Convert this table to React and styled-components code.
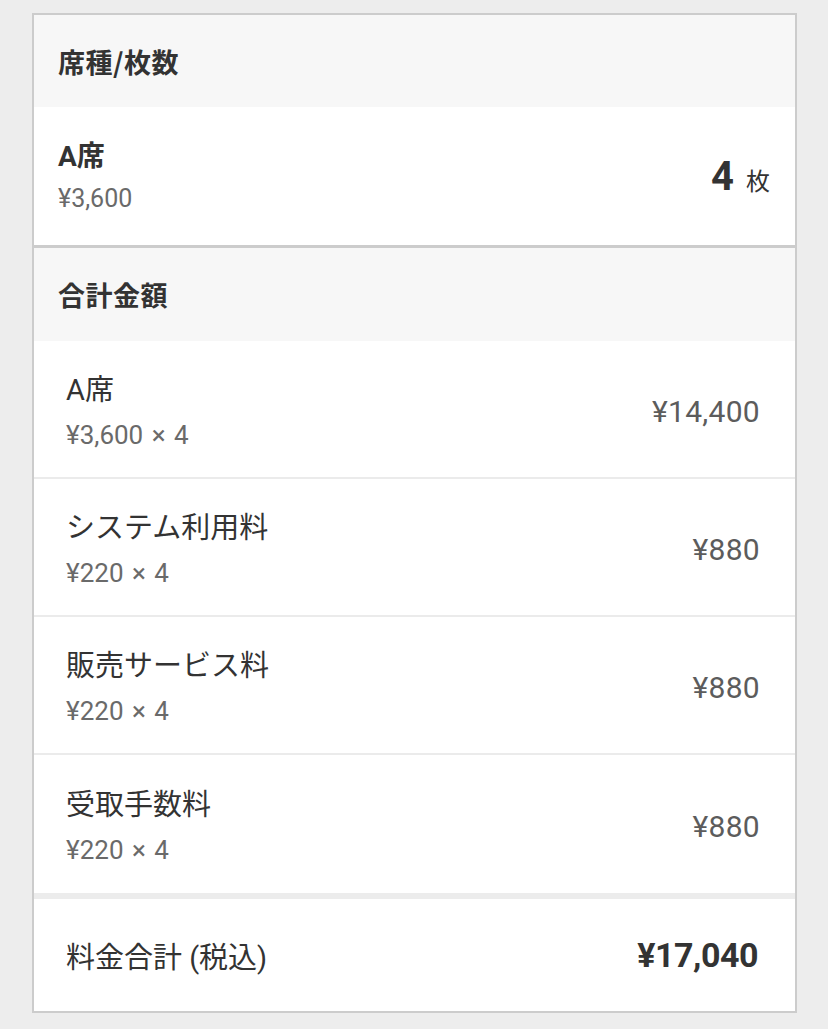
import React from "react";
import styled, { createGlobalStyle } from "styled-components";

const GlobalStyle = createGlobalStyle`
  html, body {
    margin: 0;
    padding: 0;
    background: #ededed;
  }
  body {
    font-family: Roboto, "Noto Sans CJK JP", sans-serif;
    color: #333;
  }
`;

const Page = styled.div`
  padding: 13px 31px 18px 32px;
`;

const Card = styled.div`
  background: #fff;
  border: 2px solid #cccccc;
`;

const Section = styled.section`
  border-top: ${(p) => (p.$divided ? "3px solid #cccccc" : "none")};
`;

const SectionHeader = styled.h2`
  margin: 0;
  height: ${(p) => p.$h || 92}px;
  display: flex;
  align-items: center;
  padding: 0 24px;
  background: #f7f7f7;
  font-family: "Noto Sans CJK JP", sans-serif;
  font-size: 27px;
  font-weight: 700;
  color: #333;
  letter-spacing: 0.5px;
`;

const Row = styled.div`
  display: flex;
  align-items: center;
  justify-content: space-between;
  box-sizing: border-box;
  height: ${(p) => p.$h}px;
  padding: ${(p) => p.$pad};
  border-bottom: ${(p) => (p.$sep ? "2px solid #ebebeb" : "none")};
`;

const Labels = styled.div`
  display: flex;
  flex-direction: column;
  gap: ${(p) => p.$gap || 8}px;
`;

const Title = styled.div`
  font-family: Roboto, "Noto Sans CJK JP", sans-serif;
  font-size: ${(p) => p.$size}px;
  line-height: ${(p) => p.$size + 10}px;
  font-weight: ${(p) => (p.$bold ? 700 : 400)};
  color: #333;
`;

const Sub = styled.div`
  font-family: Roboto, "Noto Sans CJK JP", sans-serif;
  font-size: ${(p) => p.$size}px;
  line-height: ${(p) => p.$size + 8}px;
  color: #6a6a6a;
  word-spacing: 2px;
`;

const Count = styled.div`
  display: flex;
  align-items: baseline;
  gap: 12px;
  color: #333;
`;

const CountNum = styled.span`
  font-family: Roboto, sans-serif;
  font-size: 40px;
  font-weight: 700;
`;

const CountUnit = styled.span`
  font-family: "Noto Sans CJK JP", sans-serif;
  font-size: 24px;
`;

const Amount = styled.div`
  font-family: Roboto, "Noto Sans CJK JP", sans-serif;
  font-size: ${(p) => (p.$total ? 34 : 30)}px;
  font-weight: ${(p) => (p.$total ? 700 : 400)};
  color: ${(p) => (p.$total ? "#333" : "#5c5c5c")};
  letter-spacing: ${(p) => (p.$total ? "-0.5px" : "0.3px")};
`;

const TotalRow = styled(Row)`
  border-top: 6px solid #ececec;
`;

const TotalLabel = styled.div`
  font-family: Roboto, "Noto Sans CJK JP", sans-serif;
  font-size: 29px;
  color: #333;
`;

const items = [
  { name: "A席", detail: "¥3,600 × 4", amount: "¥14,400" },
  { name: "システム利用料", detail: "¥220 × 4", amount: "¥880" },
  { name: "販売サービス料", detail: "¥220 × 4", amount: "¥880" },
  { name: "受取手数料", detail: "¥220 × 4", amount: "¥880" },
];

export default function App() {
  return (
    <Page>
      <GlobalStyle />
      <Card>
        <Section>
          <SectionHeader>席種/枚数</SectionHeader>
          <Row $h={138} $pad="0 25px 0 24px">
            <Labels $gap={6}>
              <Title $size={28} $bold>A席</Title>
              <Sub $size={25}>¥3,600</Sub>
            </Labels>
            <Count>
              <CountNum>4</CountNum>
              <CountUnit>枚</CountUnit>
            </Count>
          </Row>
        </Section>
        <Section $divided>
          <SectionHeader $h={93}>合計金額</SectionHeader>
          {items.map((it, i) => (
            <Row
              key={i}
              $h={138}
              $pad="4px 35px 0 32px"
              $sep={i < items.length - 1}
            >
              <Labels>
                <Title $size={29}>{it.name}</Title>
                <Sub $size={26}>{it.detail}</Sub>
              </Labels>
              <Amount>{it.amount}</Amount>
            </Row>
          ))}
          <TotalRow $h={118} $pad="0 37px 0 32px">
            <TotalLabel>料金合計 (税込)</TotalLabel>
            <Amount $total>¥17,040</Amount>
          </TotalRow>
        </Section>
      </Card>
    </Page>
  );
}
